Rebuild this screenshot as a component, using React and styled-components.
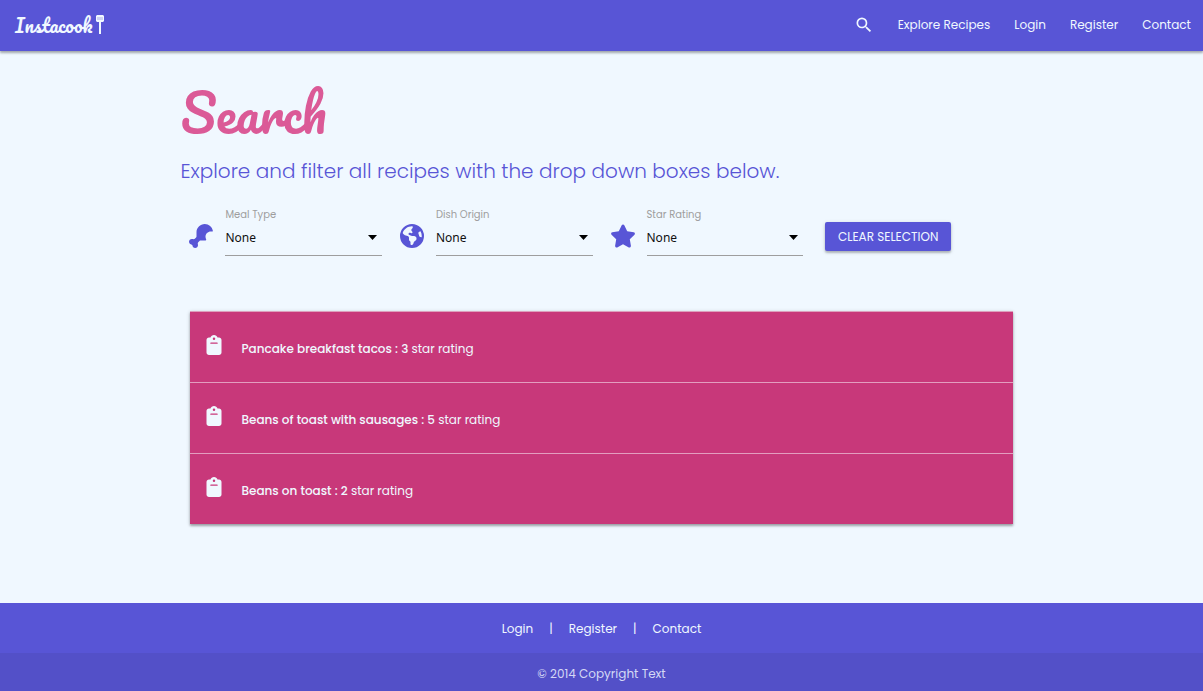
import React, { useState } from "react";
import styled, { createGlobalStyle } from "styled-components";
import { MdSearch } from "react-icons/md";
import { FaDrumstickBite, FaEarthAmericas, FaStar, FaClipboard } from "react-icons/fa6";

const indigo = "#5855d6";
const ice = "#f0f8ff";

const Global = createGlobalStyle`
  *, *::before, *::after { box-sizing: border-box; }
  body {
    margin: 0;
    background: ${ice};
    font-family: Poppins, Inter, sans-serif;
    font-size: 12px;
    line-height: 18px;
  }
  a { color: inherit; text-decoration: none; }
`;

const Page = styled.div`
  min-height: 100vh;
  display: flex;
  flex-direction: column;
`;

const NavBar = styled.nav`
  display: flex;
  align-items: center;
  justify-content: space-between;
  height: 51px;
  padding: 0 12px 2px 15px;
  background: ${indigo};
  color: ${ice};
  box-shadow: 0 2px 2px rgba(0, 0, 0, 0.25), 0 1px 4px rgba(0, 0, 0, 0.15);
`;

const Brand = styled.a`
  display: flex;
  align-items: center;
  gap: 4px;
  font: 19px/24px Pacifico, Lato, cursive;
`;

const NavLinks = styled.ul`
  display: flex;
  align-items: center;
  gap: 24px;
  margin: 0;
  padding: 0;
  list-style: none;
`;

const NavLink = styled.a`
  display: flex;
  align-items: center;
`;

const Main = styled.main`
  flex: 1;
  width: 70%;
  margin: 0 auto;
`;

const Title = styled.h1`
  margin: 26px 0 0;
  color: #db5a97;
  font: 51px/72px Pacifico, Lato, cursive;
`;

const Intro = styled.p`
  margin: 7px 0 0;
  color: ${indigo};
  font-size: 20px;
  font-weight: 300;
  line-height: 30px;
`;

const Filters = styled.form`
  display: grid;
  grid-template-columns: repeat(4, 1fr);
  margin-top: 20px;
`;

const Field = styled.div`
  display: grid;
  grid-template-columns: 24px 1fr;
  column-gap: 12px;
  padding: 0 9px;
  color: ${indigo};
  > svg {
    width: 26px;
    height: 24px;
    justify-self: center;
    align-self: start;
  }
`;

const Label = styled.label`
  grid-column: 2;
  color: #9e9e9e;
  font-size: 10px;
  line-height: 18px;
`;

const SelectBox = styled.div`
  display: flex;
  align-items: center;
  position: relative;
  color: #000;
`;

const Select = styled.select`
  width: 100%;
  height: 32px;
  padding: 0 0 4px;
  appearance: none;
  border: 0;
  border-bottom: 1px solid #9e9e9e;
  border-radius: 0;
  background: transparent;
  color: #111;
  font: 12px "Noto Sans", sans-serif;
`;

const Caret = styled.svg`
  position: absolute;
  top: 11px;
  right: 5px;
  pointer-events: none;
`;

const Action = styled.div`
  padding: 16px 13px 0;
`;

const Button = styled.button`
  height: 29px;
  padding: 0 13px;
  border: 0;
  border-radius: 2px;
  background: ${indigo};
  color: ${ice};
  font: 12px Poppins, Inter, sans-serif;
  text-transform: uppercase;
  white-space: nowrap;
  box-shadow: 0 2px 2px rgba(0, 0, 0, 0.2), 0 1px 4px rgba(0, 0, 0, 0.15);
`;

const Recipes = styled.ul`
  margin: 55px 10px 79px;
  padding: 0;
  list-style: none;
  border-top: 1px solid #dda0bd;
  box-shadow: 0 2px 2px rgba(0, 0, 0, 0.25), 0 1px 4px rgba(0, 0, 0, 0.2);
`;

const Recipe = styled.li`
  background: #c8387a;
  color: ${ice};
  & + & { border-top: 1px solid #e39dbf; }
`;

const RecipeLink = styled.a`
  display: flex;
  align-items: center;
  gap: 17px;
  height: 70px;
  padding: 0 14px;
  svg { margin-bottom: 4px; }
`;

const RecipeText = styled.span`
  padding-top: 4px;
`;

const Name = styled.span`
  font-weight: 500;
`;

const Footer = styled.footer`
  background: ${indigo};
  color: ${ice};
`;

const FooterLinks = styled.div`
  display: flex;
  justify-content: center;
  gap: 16px;
  padding: 17px 0 15px;
`;

const Copyright = styled.div`
  padding: 12px 0 8px;
  background: #5350c8;
  color: #d3d8f4;
  text-align: center;
`;

function Spatula() {
  return (
    <svg width="8" height="20" viewBox="0 0 8 20" aria-hidden="true">
      <path d="M1 0h6l1 1v5L7 7H5v12H3V7H1L0 6V1z" fill="#f0f8ff" />
      <path d="M2 2v3M4 2v3M6 2v3" stroke="#9997e5" strokeWidth="0.800" />
    </svg>
  );
}

const filters = [
  { id: "meal", label: "Meal Type", Icon: FaDrumstickBite, options: ["None", "Breakfast", "Lunch", "Dinner"] },
  { id: "origin", label: "Dish Origin", Icon: FaEarthAmericas, options: ["None", "British", "Mexican", "Italian"] },
  { id: "rating", label: "Star Rating", Icon: FaStar, options: ["None", "1", "2", "3", "4", "5"] },
];

const recipes = [
  { name: "Pancake breakfast tacos", rating: 3 },
  { name: "Beans of toast with sausages", rating: 5 },
  { name: "Beans on toast", rating: 2 },
];

const empty = { meal: "None", origin: "None", rating: "None" };

export default function App() {
  const [values, setValues] = useState(empty);
  return (
    <Page>
      <Global />
      <NavBar>
        <Brand href="#home">Instacook<Spatula /></Brand>
        <NavLinks>
          <li><NavLink href="#search" aria-label="Search"><MdSearch size={20} /></NavLink></li>
          <li><NavLink href="#recipes">Explore Recipes</NavLink></li>
          <li><NavLink href="#login">Login</NavLink></li>
          <li><NavLink href="#register">Register</NavLink></li>
          <li><NavLink href="#contact">Contact</NavLink></li>
        </NavLinks>
      </NavBar>
      <Main>
        <Title>Search</Title>
        <Intro>Explore and filter all recipes with the drop down boxes below.</Intro>
        <Filters>
          {filters.map(({ id, label, Icon, options }) => (
            <Field key={id}>
              <Label htmlFor={id}>{label}</Label>
              <Icon />
              <SelectBox>
                <Select
                  id={id}
                  value={values[id]}
                  onChange={(e) => setValues({ ...values, [id]: e.target.value })}
                >
                  {options.map((o) => <option key={o}>{o}</option>)}
                </Select>
                <Caret width="9" height="5" viewBox="0 0 9 5" aria-hidden="true">
                  <path d="M0 0h9L4.500 5z" />
                </Caret>
              </SelectBox>
            </Field>
          ))}
          <Action>
            <Button type="button" onClick={() => setValues(empty)}>Clear selection</Button>
          </Action>
        </Filters>
        <Recipes>
          {recipes.map(({ name, rating }) => (
            <Recipe key={name}>
              <RecipeLink href="#recipe">
                <FaClipboard size={20} />
                <RecipeText><Name>{name} : {rating}</Name> star rating</RecipeText>
              </RecipeLink>
            </Recipe>
          ))}
        </Recipes>
      </Main>
      <Footer>
        <FooterLinks>
          <a href="#login">Login</a>
          <span>|</span>
          <a href="#register">Register</a>
          <span>|</span>
          <a href="#contact">Contact</a>
        </FooterLinks>
        <Copyright>© 2014 Copyright Text</Copyright>
      </Footer>
    </Page>
  );
}
